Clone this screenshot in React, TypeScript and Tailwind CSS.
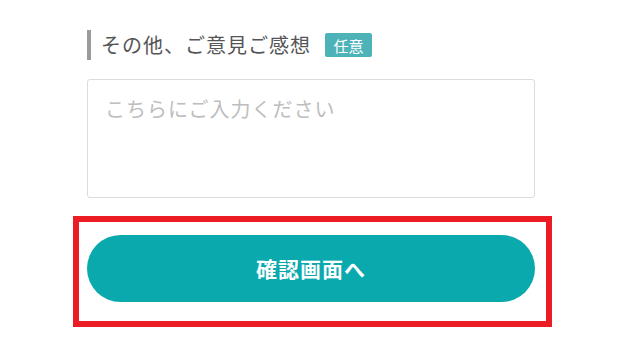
import React from 'react';

const font = { fontFamily: '"Noto Sans CJK JP", "Noto Sans", sans-serif' };

export default function App() {
  return (
    <div className="w-[640px] h-[360px] bg-white overflow-hidden" style={font}>
      <div className="ml-[87px] w-[448px] pt-[30px]">
        {/* label */}
        <div className="flex items-center h-[30px]">
          <div className="w-[4px] h-[30px] bg-[#9a9a9a]" />
          <span className="ml-[10px] text-[20px] tracking-[1px] text-[#555555] leading-none">
            その他、ご意見ご感想
          </span>
          <span className="ml-[14px] w-[47px] h-[24px] flex items-center justify-center rounded-[2px] bg-[#4db3b8] text-white text-[15px] leading-none">
            任意
          </span>
        </div>

        {/* textarea */}
        <textarea
          className="mt-[19px] block w-[448px] h-[119px] resize-none border border-[#dcdcdc] rounded-[3px] px-[17px] pt-[14px] text-[20px] tracking-[1px] leading-[1.5] text-[#333] placeholder:text-[#bdbdbd] outline-none"
          placeholder="こちらにご入力ください"
          style={font}
        />

        {/* submit, highlighted */}
        <div className="mt-[18px] -ml-[14px] w-[479px] border-[6px] border-[#ec1c24] pt-[13px] pb-[19px] pl-[8px]">
          <button
            type="button"
            className="w-[448px] h-[67px] rounded-full bg-[#0aa9ae] text-white text-[21px] font-bold tracking-[1px] flex items-center justify-center"
            style={font}
          >
            確認画面へ
          </button>
        </div>
      </div>
    </div>
  );
}
